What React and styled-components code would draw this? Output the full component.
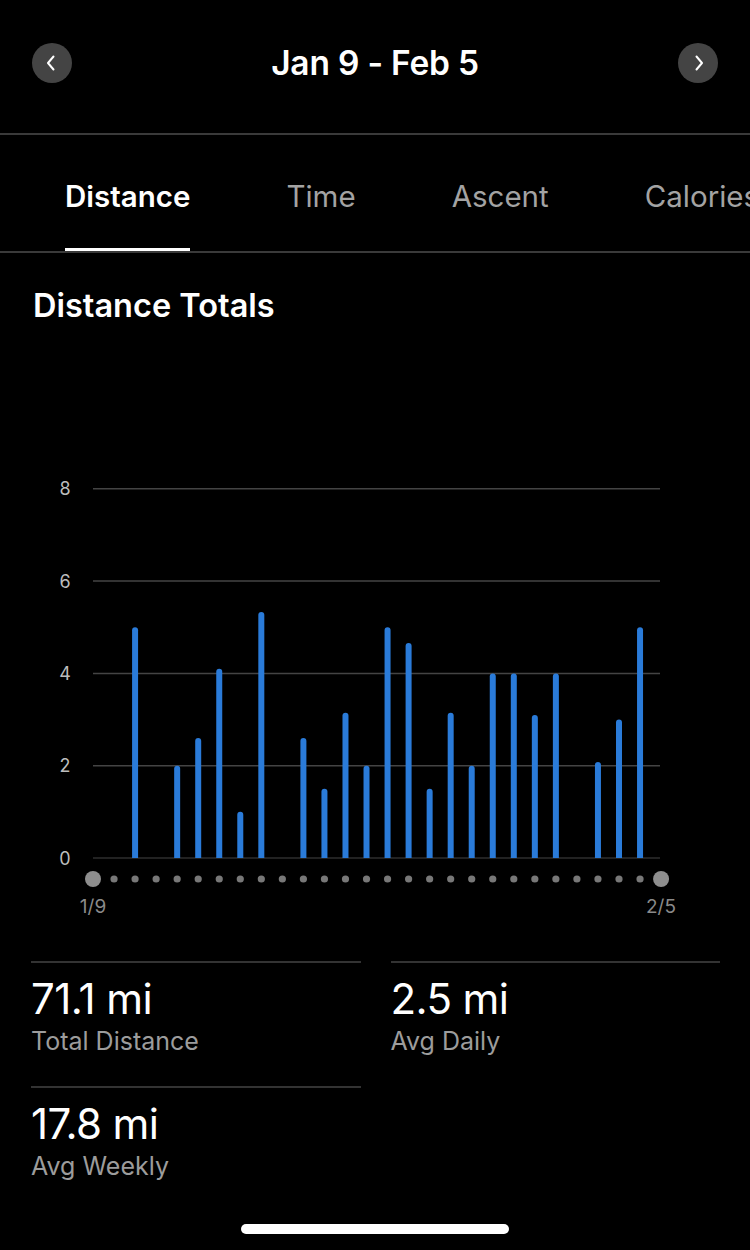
import React from 'react';
import styled, { createGlobalStyle } from 'styled-components';

const GlobalStyle = createGlobalStyle`
  html, body {
    margin: 0;
    padding: 0;
    background: #000;
  }
  body {
    font-family: Inter, "Noto Sans", "Liberation Sans", sans-serif;
    color: #fff;
    -webkit-font-smoothing: antialiased;
  }
`;

const Page = styled.div`
  width: 750px;
  min-height: 1250px;
  background: #000;
  overflow: hidden;
`;

const Header = styled.header`
  height: 135px;
  display: flex;
  align-items: center;
  justify-content: space-between;
  padding: 0 32px 8px;
  box-sizing: border-box;
  border-bottom: 2px solid #3a3a3a;
`;

const NavButton = styled.button`
  width: 40px;
  height: 40px;
  border-radius: 50%;
  border: none;
  padding: 0;
  background: #444;
  display: flex;
  align-items: center;
  justify-content: center;
  svg {
    margin-left: ${p => (p.next ? '2px' : '-2px')};
  }
`;

const Range = styled.h1`
  margin: 0;
  font-size: 33.5px;
  font-weight: 600;
  letter-spacing: -0.2px;
`;

const Tabs = styled.nav`
  height: 116px;
  display: flex;
  gap: 96px;
  padding-left: 65px;
  border-bottom: 2px solid #3a3a3a;
  white-space: nowrap;
  overflow: hidden;
`;

const Tab = styled.div`
  height: 100%;
  box-sizing: border-box;
  display: flex;
  align-items: center;
  padding-top: 8px;
  font-size: 29.5px;
  font-weight: ${p => (p.active ? 600 : 400)};
  color: ${p => (p.active ? '#fff' : '#a3a3a3')};
  border-bottom: 3px solid ${p => (p.active ? '#fff' : 'transparent')};
`;

const SectionTitle = styled.h2`
  margin: 0;
  padding: 35px 0 0 33px;
  font-size: 32.5px;
  line-height: 36px;
  font-weight: 600;
`;

const Chart = styled.svg`
  display: block;
  margin-top: 137px;
`;

const Stats = styled.div`
  margin-top: 40px;
  padding: 0 30px 0 31px;
  display: grid;
  grid-template-columns: 1fr 1fr;
  column-gap: 30px;
`;

const Stat = styled.div`
  border-top: 2px solid #333;
  padding: 13px 0 29px;
`;

const Value = styled.div`
  font-size: 42px;
  line-height: 46px;
  letter-spacing: -0.6px;
`;

const Label = styled.div`
  margin-top: 3px;
  font-size: 25px;
  line-height: 32px;
  color: #9c9c9c;
`;

const HomeBar = styled.div`
  position: fixed;
  left: 241px;
  top: 1224px;
  width: 268px;
  height: 10px;
  border-radius: 5px;
  background: #fff;
`;

const Chevron = ({ dir }) => (
  <svg width="10" height="16" viewBox="0 0 10 16">
    <path
      d={dir === 'left' ? 'M7.5 1.5 L2 8 L7.5 14.5' : 'M2.5 1.5 L8 8 L2.5 14.5'}
      fill="none"
      stroke="#fff"
      strokeWidth="2"
      strokeLinecap="round"
      strokeLinejoin="round"
    />
  </svg>
);

// miles per day, 1/9 .. 2/5
const days = [0, 0, 5, 0, 2, 2.6, 4.1, 1, 5.33, 0, 2.6, 1.5, 3.15, 2, 5, 4.66, 1.5, 3.15, 2, 4, 4, 3.1, 4, 0, 2.08, 3, 5, 0];

const X0 = 93;
const STEP = 21.04;
const BASE = 397;
const UNIT = 46.15;

const yOf = v => BASE - v * UNIT;

const barPath = (x, top) =>
  `M${x - 3} ${BASE} V${top + 3} A3 3 0 0 1 ${x + 3} ${top + 3} V${BASE} Z`;

const DistanceChart = () => (
  <Chart width="750" height="460" viewBox="0 0 750 460">
    {[8, 6, 4, 2, 0].map(v => (
      <g key={v}>
        <line x1={X0} x2="660" y1={yOf(v)} y2={yOf(v)} stroke={v === 0 ? '#2e2e2e' : '#444'} strokeWidth="1.5" />
        <text x="65" y={yOf(v)} fill="#bdbdbd" fontSize="18" textAnchor="middle" dominantBaseline="central" fontFamily="Inter, sans-serif">
          {v}
        </text>
      </g>
    ))}
    {days.map((v, i) => {
      const x = X0 + i * STEP;
      return v > 0 ? <path key={i} d={barPath(x, yOf(v))} fill="#2a7bd9" /> : null;
    })}
    {days.map((v, i) => {
      const x = X0 + i * STEP;
      const edge = i === 0 || i === days.length - 1;
      return <circle key={i} cx={x} cy="418" r={edge ? 8 : 3.6} fill={edge ? '#8e8e8e' : '#787878'} />;
    })}
    <text x={X0} y="445" fill="#8a8a8a" fontSize="19" textAnchor="middle" dominantBaseline="central" fontFamily="Inter, sans-serif">1/9</text>
    <text x={661} y="445" fill="#8a8a8a" fontSize="19" textAnchor="middle" dominantBaseline="central" fontFamily="Inter, sans-serif">2/5</text>
  </Chart>
);

const stats = [
  { value: '71.1 mi', label: 'Total Distance' },
  { value: '2.5 mi', label: 'Avg Daily' },
  { value: '17.8 mi', label: 'Avg Weekly' },
];

export default function App() {
  return (
    <Page>
      <GlobalStyle />
      <Header>
        <NavButton aria-label="Previous">
          <Chevron dir="left" />
        </NavButton>
        <Range>Jan 9 - Feb 5</Range>
        <NavButton next aria-label="Next">
          <Chevron dir="right" />
        </NavButton>
      </Header>
      <Tabs>
        <Tab active>Distance</Tab>
        <Tab>Time</Tab>
        <Tab>Ascent</Tab>
        <Tab>Calories</Tab>
      </Tabs>
      <SectionTitle>Distance Totals</SectionTitle>
      <DistanceChart />
      <Stats>
        {stats.map(s => (
          <Stat key={s.label}>
            <Value>{s.value}</Value>
            <Label>{s.label}</Label>
          </Stat>
        ))}
      </Stats>
      <HomeBar />
    </Page>
  );
}
